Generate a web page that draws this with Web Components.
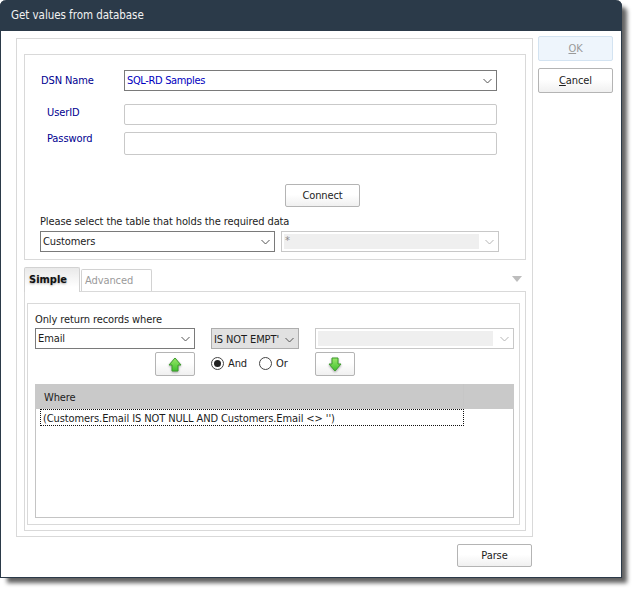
<!DOCTYPE html>
<html><head><meta charset="utf-8"><style>
html{background:#fff}
body{margin:0;padding:0;height:593px;font-family:"DejaVu Sans",sans-serif;font-stretch:condensed;font-size:11px;letter-spacing:-.1px;color:#1c1c1c}
</style></head><body>
<x-dialog heading="Get values from database">
  <x-panel style="width:502px;height:482px;padding:15px 6px 0 7px">
    <x-panel style="width:500px;height:204px;">
      <x-row style="margin:15px 0 0 16px;height:21px">
        <x-label style="width:83px;color:#000090;margin-top:-1px">DSN Name</x-label>
        <x-select style="width:373px;color:#0000c0;letter-spacing:-.35px" value="SQL-RD Samples" strong></x-select>
      </x-row>
      <x-row style="margin:13px 0 0 22px;height:21px">
        <x-label style="width:77px;color:#000090;margin-top:-5px">UserID</x-label>
        <x-field style="width:373px;height:21px"></x-field>
      </x-row>
      <x-row style="margin:7px 0 0 22px;height:23px">
        <x-label style="width:77px;color:#000090;margin-top:-11px">Password</x-label>
        <x-field style="width:373px;height:23px"></x-field>
      </x-row>
      <x-row style="margin:29px 0 0 260px;height:23px"><x-button style="width:75px;height:23px">Connect</x-button></x-row>
      <x-row style="margin:7px 0 0 15px;height:17px"><x-label style="margin-top:-2px">Please select the table that holds the required data</x-label></x-row>
      <x-row style="margin:0 0 0 15px;height:21px;gap:6px">
        <x-select style="width:235px" value="Customers" strong></x-select>
        <x-select style="width:218px" value="*" disabled inset="195"></x-select>
      </x-row>
    </x-panel>
    <x-tabs style="margin-top:7px">
      <x-panel style="width:493px;height:227px;padding:11px 5px 0 2px;">
        <x-panel style="width:491px;height:220px;">
          <x-label style="display:block;margin:8px 0 0 7px;height:16px;line-height:16px">Only return records where</x-label>
          <x-row style="margin:0 0 0 7px;height:21px;gap:16px">
            <x-select style="width:160px" value="Email" strong></x-select>
            <x-select style="width:88px;background:#e1e1e1;--b:#adadad;padding-top:2px" value="IS NOT EMPT'"></x-select>
            <x-select style="width:199px" value="" disabled inset="175"></x-select>
          </x-row>
          <x-row style="margin:3px 0 0 127px;height:24px;gap:16px">
            <x-button style="width:40px;height:24px"><x-arrow dir="up"></x-arrow></x-button>
            <x-row style="width:88px;gap:4px;height:24px;margin-top:-2px">
              <x-radio checked>And</x-radio><x-radio style="margin-left:8px">Or</x-radio>
            </x-row>
            <x-button style="width:40px;height:24px"><x-arrow dir="down"></x-arrow></x-button>
          </x-row>
          <x-list style="margin:8px 0 0 7px" heading="Where" value="(Customers.Email IS NOT NULL AND Customers.Email &lt;&gt; '')"></x-list>
        </x-panel>
      </x-panel>
    </x-tabs>
  </x-panel>
  <x-button slot="side" style="width:75px;height:25px;--bg:#eef5fc;--bd:#d3e3f1;color:#9a9a9a"><u>O</u>K</x-button>
  <x-button slot="side" style="width:75px;height:25px;margin-top:7px"><u>C</u>ancel</x-button>
  <x-button slot="foot" style="width:75px;height:23px">Parse</x-button>
</x-dialog>
<script>
const def=(n,html)=>customElements.define(n,class extends HTMLElement{
  connectedCallback(){ if(this.shadowRoot) return; const r=this.attachShadow({mode:'open'}); r.innerHTML=typeof html==='function'?html(this):html;}
});
const chev=c=>`<svg width="9" height="6" viewBox="0 0 9 6" style="flex:none"><path d="M.5 1l4 4 4-4" fill="none" stroke="${c}" stroke-width="1"/></svg>`;
def('x-dialog',e=>`<style>
:host{display:block;width:622px;height:578px;box-sizing:border-box;background:#fff;border:solid #2b3a49;border-width:0 1px 1px 1px;border-radius:6px 6px 0 0;box-shadow:6px 6px 4px -1px rgba(0,0,0,.62)}
.t{height:31px;margin:0 -1px;background:#2b3a49;color:#f2f2f2;border-radius:6px 6px 0 0;font-size:11.5px;letter-spacing:-.05px;line-height:31px;padding-left:11px;box-sizing:border-box}
.m{display:flex;padding:7px 0 0 15px}
.s{display:flex;flex-direction:column;margin:-2px 0 0 5px}
.f{display:flex;justify-content:flex-end;width:516px;margin:7px 0 0 15px}
</style><div class="t">${e.getAttribute('heading')}</div>
<div class="m"><div><slot></slot></div><div class="s"><slot name="side"></slot></div></div>
<div class="f"><slot name="foot"></slot></div>`);
def('x-panel',`<style>:host{display:block;box-sizing:content-box;border:1px solid #d9d9d9;background:#fff}</style><slot></slot>`);
def('x-row',`<style>:host{display:flex;align-items:center}</style><slot></slot>`);
def('x-label',`<style>:host{display:inline-block;white-space:nowrap;flex:none}</style><slot></slot>`);
def('x-field',`<style>:host{display:block;box-sizing:border-box;border:1px solid #c9c9c9;border-radius:2px;background:#fff;flex:none}</style>`);
def('x-select',e=>{
 const d=e.hasAttribute('disabled'),st=e.hasAttribute('strong'),ins=e.getAttribute('inset');
 return `<style>:host{display:flex;align-items:center;box-sizing:border-box;height:21px;flex:none;border:1px solid var(--b,${st?'#7a7a7a':'#c8c8c8'})}
 .v{flex:1;min-width:0;padding-left:2px;white-space:nowrap}
 .i{width:${ins}px;flex:none;height:15px;background:#efefef;margin-left:2px;padding-left:1px;color:#8a8a8a;line-height:13px;box-sizing:border-box}
 .a{display:flex;flex:none;width:17px;justify-content:center;margin-left:auto}
 </style>${ins!==null?`<div class="i">${e.getAttribute('value')}</div>`:`<div class="v">${e.getAttribute('value')}</div>`}<div class="a">${chev(d?'#b5b5b5':'#555')}</div>`});
def('x-button',`<style>:host{display:flex;align-items:center;justify-content:center;box-sizing:border-box;flex:none;border:1px solid var(--bd,#b4b4b4);border-radius:2px;background:var(--bg,linear-gradient(#fff,#fff 45%,#f0f0f0))}</style><slot></slot>`);
def('x-arrow',e=>{
 const up=e.getAttribute('dir')==='up';
 const p=up?'M7 1L13 8H10V14H4V8H1Z':'M4 1H10V7H13L7 14L1 7H4Z';
 return `<style>:host{display:block;height:15px;width:14px}</style><svg width="14" height="15" viewBox="0 0 14 15" style="filter:drop-shadow(0 1px 1px rgba(0,0,0,.35))"><defs><linearGradient id="g" x1="0" y1="0" x2="0" y2="1"><stop offset="0" stop-color="#9be86a"/><stop offset="1" stop-color="#3fc02f"/></linearGradient></defs><path d="${p}" fill="url(#g)" stroke="#3c9a2c" stroke-width="1"/></svg>`});
def('x-radio',e=>`<style>:host{display:flex;align-items:center;gap:4px;flex:none}
.c{width:13px;height:13px;box-sizing:border-box;border:1px solid #444;border-radius:50%;display:flex;align-items:center;justify-content:center}
.d{width:7px;height:7px;border-radius:50%;background:#222}</style><div class="c">${e.hasAttribute('checked')?'<div class="d"></div>':''}</div><slot></slot>`);
def('x-tabs',`<style>:host{display:block;position:relative}
.h{display:flex;align-items:flex-end;height:24px;gap:1px}
.t{box-sizing:border-box;border:1px solid #d2d2d2;border-bottom:0;border-radius:2px 2px 0 0;display:flex;align-items:center}
.a{width:56px;height:25px;margin-bottom:-1px;position:relative;z-index:1;font-weight:700;letter-spacing:0;background:linear-gradient(#e9e9e9,#fff 80%);padding:0 0 2px 4px;color:#111;text-shadow:0 1px 2px #aaa}
.b{width:71px;height:22px;color:#9a9a9a;padding-left:3px}
svg{position:absolute;right:4px;top:9px}</style>
<div class="h"><div class="t a">Simple</div><div class="t b">Advanced</div></div>
<svg width="10" height="6" viewBox="0 0 10 6"><path d="M0 0H10L5 6Z" fill="#bdbdbd"/></svg><slot></slot>`);
def('x-list',e=>`<style>:host{display:block;box-sizing:border-box;width:479px;height:134px;border:solid #c4c4c4;border-width:0 1px 1px 1px}
.h{display:flex;height:25px;background:#c9c9c9;margin:0 -1px}
.c{width:429px;box-sizing:border-box;padding:1px 0 0 9px;line-height:25px;border-right:1px solid #c6c6c6}
.r{margin:0 0 0 4px;width:424px;height:17px;box-sizing:border-box;border:1px dotted #111;line-height:17px;padding-left:2px;white-space:nowrap;overflow:hidden}</style>
<div class="h"><div class="c">${e.getAttribute('heading')}</div></div>
<div class="r">${e.getAttribute('value').replace(/&/g,'&amp;').replace(/</g,'&lt;')}</div>`);
</script>
</body></html>
